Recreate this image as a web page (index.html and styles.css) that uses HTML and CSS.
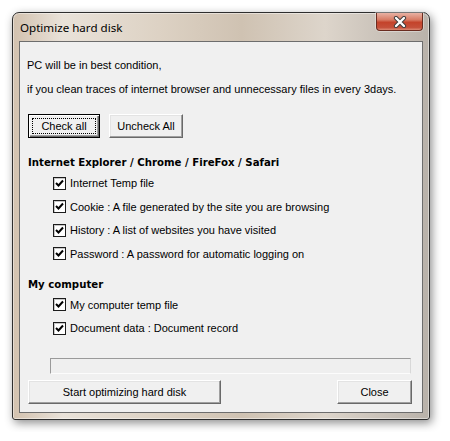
FILE: index.html
```html
<!DOCTYPE html>
<html>
<head>
<meta charset="utf-8">
<link rel="stylesheet" href="styles.css">
</head>
<body>
<div class="window">
  <div class="titlebar">
    <span class="title">Optimize hard disk</span>
    <span class="close-x">
      <svg width="16" height="12" viewBox="0 0 16 12">
        <path d="M4 2 L12 10 M12 2 L4 10" stroke="#3b3b3b" stroke-width="4.2" stroke-linecap="round"/>
        <path d="M4 2 L12 10 M12 2 L4 10" stroke="#ffffff" stroke-width="2.4" stroke-linecap="round"/>
      </svg>
    </span>
  </div>
  <div class="client">
    <p class="line first">PC will be in best condition,</p>
    <p class="line second">if you clean traces of internet browser and unnecessary files in every 3days.</p>
    <div class="btnrow">
      <button class="btn default"><span class="focus">Check all</span></button>
      <button class="btn uncheck">Uncheck All</button>
    </div>
    <h3 class="heading h-first">Internet Explorer / Chrome / FireFox / Safari</h3>
    <div class="checks">
      <label class="check"><span class="box"><svg width="9" height="9" viewBox="0 0 9 9"><path d="M1 4 L3.5 6.5 L8 1.5" fill="none" stroke="#000" stroke-width="2"/></svg></span>Internet Temp file</label>
      <label class="check"><span class="box"><svg width="9" height="9" viewBox="0 0 9 9"><path d="M1 4 L3.5 6.5 L8 1.5" fill="none" stroke="#000" stroke-width="2"/></svg></span>Cookie : A file generated by the site you are browsing</label>
      <label class="check"><span class="box"><svg width="9" height="9" viewBox="0 0 9 9"><path d="M1 4 L3.5 6.5 L8 1.5" fill="none" stroke="#000" stroke-width="2"/></svg></span>History : A list of websites you have visited</label>
      <label class="check"><span class="box"><svg width="9" height="9" viewBox="0 0 9 9"><path d="M1 4 L3.5 6.5 L8 1.5" fill="none" stroke="#000" stroke-width="2"/></svg></span>Password : A password for automatic logging on</label>
    </div>
    <h3 class="heading h-second">My computer</h3>
    <div class="checks">
      <label class="check"><span class="box"><svg width="9" height="9" viewBox="0 0 9 9"><path d="M1 4 L3.5 6.5 L8 1.5" fill="none" stroke="#000" stroke-width="2"/></svg></span>My computer temp file</label>
      <label class="check"><span class="box"><svg width="9" height="9" viewBox="0 0 9 9"><path d="M1 4 L3.5 6.5 L8 1.5" fill="none" stroke="#000" stroke-width="2"/></svg></span>Document data : Document record</label>
    </div>
    <div class="progress"></div>
    <div class="bottom">
      <button class="btn start">Start optimizing hard disk</button>
      <button class="btn closebtn">Close</button>
    </div>
  </div>
</div>
</body>
</html>
```

FILE: styles.css
```css
html, body {
  margin: 0;
  padding: 0;
  background: #ffffff;
}
body {
  padding: 12px;
  font-family: "Liberation Sans", Arial, sans-serif;
  font-size: 11px;
  color: #000;
}
.window {
  width: 416px;
  height: 406px;
  border: 1px solid #2e2e2e;
  border-radius: 7px 7px 3px 3px;
  background: linear-gradient(to right, #d2c1ae 0%, #e9e2d9 12%, #ddd2c4 35%, #cfc2b2 55%, #ddd5cb 75%, #b9b2aa 100%);
  box-shadow: 2px 3px 10px rgba(0,0,0,0.45), inset 0 0 0 1px rgba(255,255,255,0.45);
  display: flex;
  flex-direction: column;
}
.titlebar {
  height: 28px;
  display: flex;
  justify-content: space-between;
  align-items: flex-start;
  padding: 0 6px 0 7px;
}
.title {
  font-family: "Noto Sans", "Open Sans", sans-serif;
  font-size: 11.6px;
  line-height: 14px;
  margin-top: 8px;
  color: #000;
}
.close-x {
  width: 45px;
  height: 17px;
  border: 1px solid #6a2c20;
  border-top: none;
  border-radius: 0 0 4px 4px;
  background: linear-gradient(to bottom, #e8b2a4 0%, #d77b64 40%, #c4432b 55%, #c5503a 85%, #dc8a74 100%);
  display: flex;
  align-items: center;
  justify-content: center;
  box-shadow: 0 0 0 1px rgba(255,255,255,0.35);
}
.close-x svg { display: block; }
.client {
  margin: 0 6px;
  height: 370px;
  background: #f0f0f0;
  border: 1px solid #6d6d6d;
  display: flex;
  flex-direction: column;
}
.line {
  margin: 0;
  line-height: 16px;
  padding-left: 7px;
}
.first { margin-top: 15px; }
.second { margin-top: 8px; }
.btnrow {
  display: flex;
  gap: 9px;
  margin-top: 17px;
  padding-left: 8px;
}
.btn {
  font-family: "Liberation Sans", Arial, sans-serif;
  font-size: 11px;
  color: #000;
  background: #f0f0f0;
  height: 24px;
  padding: 0;
  margin: 0;
  border: 1px solid;
  border-color: #ffffff #696969 #696969 #ffffff;
  box-shadow: inset -1px -1px 0 #a0a0a0, inset 1px 1px 0 #e3e3e3;
  display: flex;
  align-items: center;
  justify-content: center;
}
.default {
  width: 72px;
  border: 1px solid #000;
  box-shadow: inset 1px 1px 0 #fff, inset -1px -1px 0 #696969, inset -2px -2px 0 #a0a0a0;
  padding: 3px;
}
.focus {
  flex: 1;
  height: 100%;
  border: 1px dotted #000;
  box-sizing: border-box;
  display: flex;
  align-items: center;
  justify-content: center;
}
.uncheck { width: 74px; }
.heading {
  margin: 0;
  font-size: 11.3px;
  font-weight: bold;
  line-height: 16px;
  padding-left: 8px;
  font-family: "DejaVu Sans Condensed", "DejaVu Sans", sans-serif;
}
.h-first { margin-top: 17px; }
.h-second { margin-top: 15px; }
.checks {
  display: flex;
  flex-direction: column;
  gap: 7.6px;
  margin-top: 4px;
  padding-left: 33px;
}
.check {
  display: flex;
  align-items: center;
  height: 16px;
  line-height: 16px;
}
.box {
  width: 11px;
  height: 11px;
  border: 1px solid #1c1c1c;
  background: #fff;
  box-shadow: inset 1px 1px 0 #c8c8c8;
  margin-right: 4px;
  display: flex;
  align-items: center;
  justify-content: center;
}
.box svg { display: block; }
.progress {
  margin: 22px 11px 0 30px;
  height: 14px;
  border: 1px solid #9a9a9a;
  border-right-color: #d8d8d8;
  border-bottom-color: #fcfcfc;
  background: #efefef;
}
.bottom {
  display: flex;
  justify-content: space-between;
  margin-top: 6px;
  padding: 0 10px 0 8px;
}
.start { width: 193px; }
.closebtn { width: 75px; }
```
